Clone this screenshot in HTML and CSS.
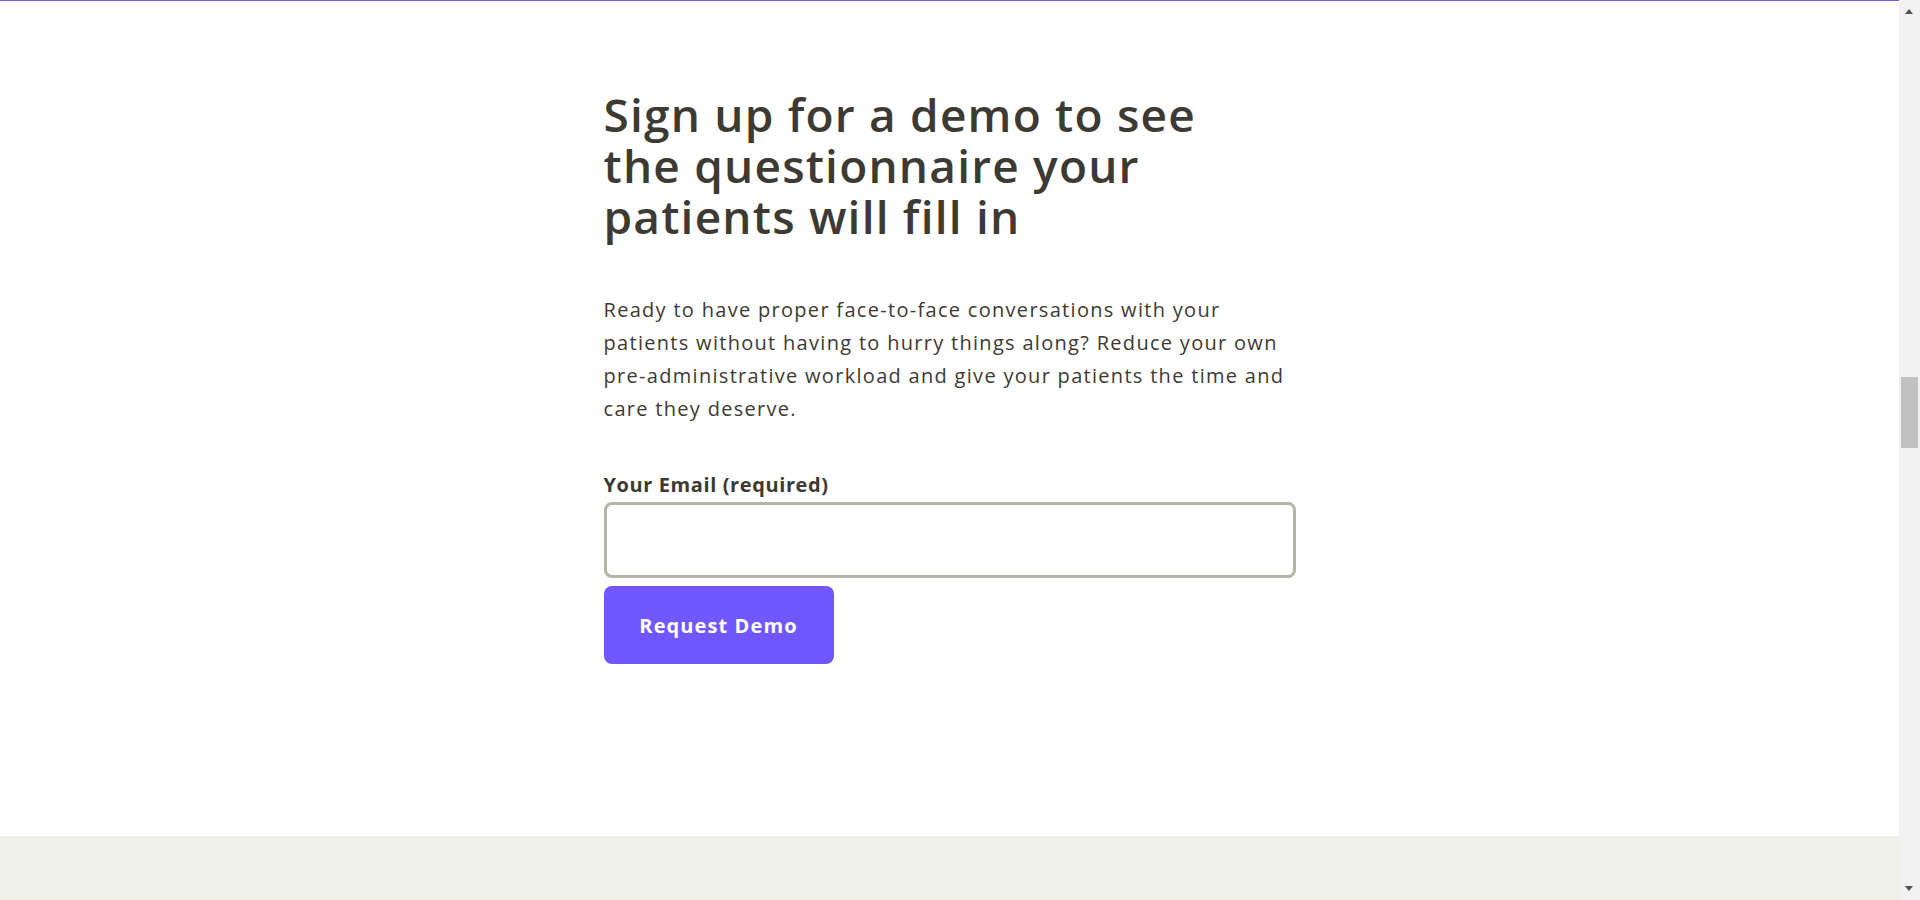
FILE: index.html
```html
<!DOCTYPE html>
<html lang="en">
<head>
<meta charset="utf-8">
<title>Request a demo</title>
<link rel="stylesheet" href="styles.css">
</head>
<body>
<div class="page">
  <div class="topbar"></div>
  <main class="section">
    <div class="container">
      <h2 class="title">Sign up for a demo to see the questionnaire your patients will fill in</h2>
      <p class="lead">Ready to have proper face-to-face conversations with your patients without having to hurry things along? Reduce your own pre-administrative workload and give your patients the time and care they deserve.</p>
      <form class="form">
        <label class="label" for="email">Your Email (required)</label>
        <input class="input" id="email" type="email">
        <button class="button" type="button">Request Demo</button>
      </form>
    </div>
  </main>
  <footer class="footer"></footer>
</div>
<div class="scrollbar">
  <span class="arrow arrow-up"></span>
  <span class="thumb"></span>
  <span class="arrow arrow-down"></span>
</div>
</body>
</html>
```
FILE: styles.css
```css
html, body {
  margin: 0;
  padding: 0;
  background: #ffffff;
  overflow: hidden;
}
body {
  font-family: "Open Sans", Lato, sans-serif;
  color: #3d3a33;
}
.page {
  margin-right: 21px;
  display: flex;
  flex-direction: column;
  min-height: 900px;
}
.topbar {
  height: 1px;
  background: #7057ff;
}
.section {
  height: 835px;
  box-sizing: border-box;
  padding-top: 88px;
}
.container {
  width: 692px;
  margin: 0 auto;
}
.title {
  margin: 0;
  font-size: 46px;
  line-height: 51px;
  font-weight: 600;
  letter-spacing: 1.2px;
  max-width: 660px;
}
.lead {
  margin: 51px 0 0;
  font-size: 20px;
  line-height: 33px;
  font-weight: 400;
  letter-spacing: 1.3px;
}
.form {
  margin-top: 48px;
  display: flex;
  flex-direction: column;
  align-items: flex-start;
}
.label {
  font-size: 20px;
  line-height: 24px;
  font-weight: 700;
  letter-spacing: 0.6px;
}
.input {
  margin-top: 5px;
  width: 100%;
  height: 76px;
  box-sizing: border-box;
  border: 3px solid #b4b5a5;
  border-radius: 8px;
  background: #fff;
  outline: none;
}
.button {
  margin-top: 8px;
  width: 230px;
  height: 78px;
  border: 0;
  border-radius: 8px;
  background: #7057ff;
  color: #fff;
  font-family: "Open Sans", Lato, sans-serif;
  font-size: 20px;
  font-weight: 700;
  letter-spacing: 1.1px;
}
.footer {
  flex: 1;
  background: #f0f0eb;
  min-height: 64px;
}
.scrollbar {
  position: fixed;
  top: 0;
  right: 0;
  width: 21px;
  height: 100%;
  background: #f1f1f1;
}
.thumb {
  position: absolute;
  left: 2px;
  top: 377px;
  width: 17px;
  height: 71px;
  background: #c1c1c1;
}
.arrow {
  position: absolute;
  left: 6px;
  width: 0;
  height: 0;
  border-left: 4.5px solid transparent;
  border-right: 4.5px solid transparent;
}
.arrow-up {
  top: 9px;
  border-bottom: 5px solid #505050;
}
.arrow-down {
  bottom: 9px;
  border-top: 5px solid #505050;
}
```
